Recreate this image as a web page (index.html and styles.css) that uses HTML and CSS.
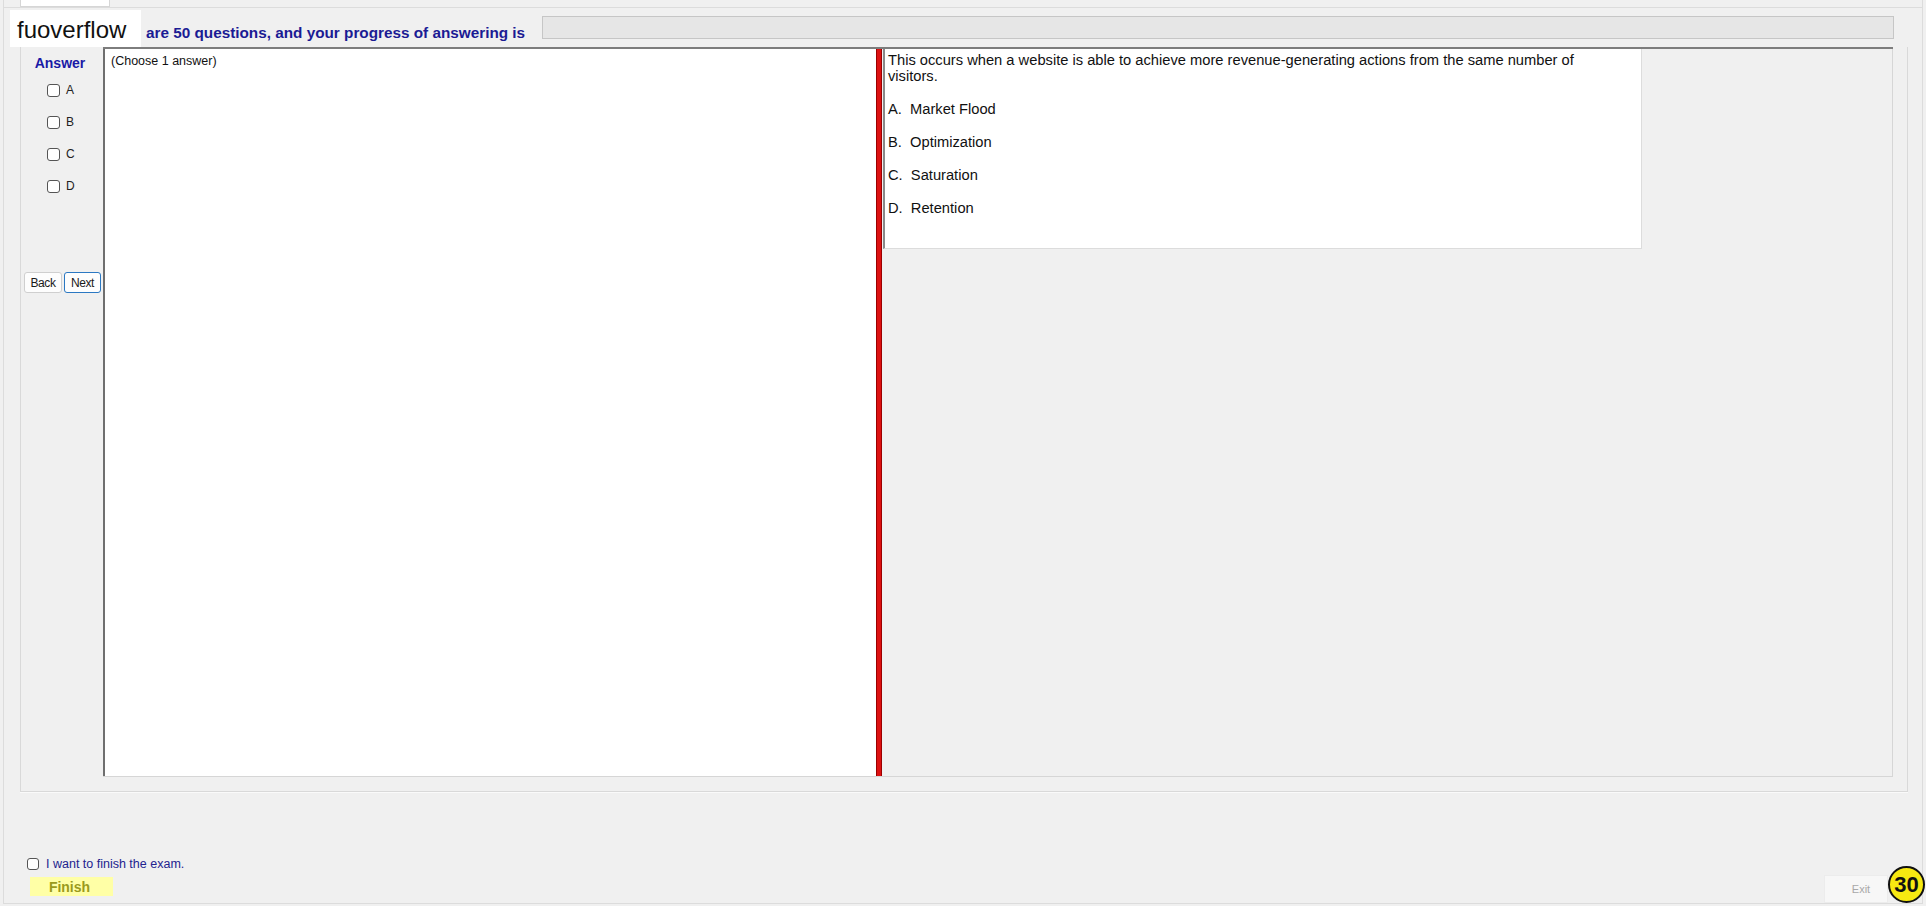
FILE: index.html
```html
<!DOCTYPE html>
<html lang="en">
<head>
    <meta charset="UTF-8">
    <meta name="viewport" content="width=device-width, initial-scale=1.0">
    <title>Exam</title>
    <link rel="stylesheet" href="styles.css">
</head>
<body>

    <div class="app">
        <div class="tabs"><span class="tab"></span></div>

        <header class="top">
            <div class="brand">fuoverflow</div>
            <div class="title">are 50 questions, and your progress of answering is</div>
            <div class="progress"></div>
        </header>

        <section class="group">
            <aside class="answers">
                <div class="answers-title">Answer</div>
                <ul class="choices">
                    <li><span class="box"></span>A</li>
                    <li><span class="box"></span>B</li>
                    <li><span class="box"></span>C</li>
                    <li><span class="box"></span>D</li>
                </ul>
                <div class="nav">
                    <button class="btn">Back</button>
                    <button class="btn btn-focus">Next</button>
                </div>
            </aside>

            <div class="split">
                <div class="pane-left">(Choose 1 answer)</div>
                <div class="splitter"></div>
                <div class="pane-right">
                    <div class="question">
                        <p class="q-text">This occurs when a website is able to achieve more revenue-generating actions from the same number of visitors.</p>
                        <p class="opt">A.  Market Flood</p>
                        <p class="opt">B.  Optimization</p>
                        <p class="opt">C.  Saturation</p>
                        <p class="opt">D.  Retention</p>
                    </div>
                </div>
            </div>
        </section>

        <footer class="bottom">
            <div class="finish-col">
                <label class="finish-check"><span class="box box-small"></span>I want to finish the exam.</label>
                <button class="finish">Finish</button>
            </div>
            <div class="exit-row">
                <button class="exit">Exit</button>
                <div class="counter">30</div>
            </div>
        </footer>
    </div>

</body>
</html>
```

FILE: styles.css
```css
body {
    margin: 0;
    height: 906px;
    background-color: #f0f0f0;
    font-family: "Liberation Sans", Arial, sans-serif;
    display: flex;
    flex-direction: column;
    overflow: hidden;
}

.app {
    flex: 1;
    margin: 0 3px 2px 3px;
    border-left: 1px solid #dcdcdc;
    border-right: 1px solid #dcdcdc;
    border-bottom: 1px solid #dcdcdc;
    display: flex;
    flex-direction: column;
}

/* tab strip at the very top */
.tabs {
    height: 7px;
    border-bottom: 1px solid #dcdcdc;
    padding-left: 16px;
}

.tab {
    display: block;
    width: 90px;
    height: 7px;
    box-sizing: border-box;
    background-color: #fff;
    border: 1px solid #d6d6d6;
    border-top: none;
}

/* header */
.top {
    display: flex;
    height: 37px;
    margin-top: 2px;
    padding-left: 6px;
}

.brand {
    width: 131px;
    box-sizing: border-box;
    padding-left: 7px;
    background-color: #fff;
    font-size: 24px;
    line-height: 39px;
    color: #111;
}

.title {
    margin: 14px 0 0 5px;
    font-size: 15.3px;
    font-weight: bold;
    line-height: 17px;
    color: #1b1b94;
    white-space: nowrap;
}

.progress {
    flex: 1;
    height: 23px;
    margin: 6px 28px 0 17px;
    box-sizing: border-box;
    border: 1px solid #c6c6c6;
    background-color: #e6e6e6;
}

/* main group */
.group {
    flex: none;
    height: 745px;
    box-sizing: border-box;
    margin: 0 14px 0 16px;
    padding-bottom: 14px;
    border-left: 1px solid #d9d9d9;
    border-right: 1px solid #d9d9d9;
    border-bottom: 1px solid #d9d9d9;
    box-shadow: 0 1px 0 #fafafa;
    display: flex;
}

.answers {
    width: 82px;
    flex: none;
    padding-top: 8px;
}

.answers-title {
    padding-right: 4px;
    text-align: center;
    font-size: 14px;
    font-weight: bold;
    line-height: 16px;
    color: #1a1aa6;
}

.choices {
    list-style: none;
    margin: 3px 0 0;
    padding: 0 0 0 26px;
}

.choices li {
    height: 32px;
    display: flex;
    align-items: center;
    gap: 6px;
    font-size: 12px;
    color: #222;
}

.box {
    width: 13px;
    height: 13px;
    box-sizing: border-box;
    border: 1px solid #555;
    border-radius: 3px;
    background-color: #fff;
}

.box-small {
    width: 12px;
    height: 12px;
}

.nav {
    display: flex;
    gap: 2px;
    margin: 70px 0 0 3px;
}

.btn {
    width: 38px;
    height: 21px;
    padding: 0;
    font-family: "Liberation Sans", Arial, sans-serif;
    font-size: 12px;
    letter-spacing: -0.4px;
    color: #1a1a1a;
    background-color: #fdfdfd;
    border: 1px solid #cfcfcf;
    border-radius: 3px;
}

.btn-focus {
    width: 37px;
    border-color: #2b78c2;
}

/* split panes */
.split {
    flex: 1;
    margin-right: 14px;
    display: flex;
    border-top: 2px solid #7d7d7d;
    border-bottom: 1px solid #d6d6d6;
}

.pane-left {
    width: 773px;
    flex: none;
    box-sizing: border-box;
    padding: 5px 6px;
    border-left: 2px solid #6f6f6f;
    background-color: #fff;
    font-size: 12.5px;
    line-height: 15px;
    color: #111;
}

.splitter {
    width: 6px;
    flex: none;
    box-sizing: border-box;
    background-color: #dd1111;
    border-left: 1px solid #9b0000;
    border-right: 1px solid #9b0000;
}

.pane-right {
    flex: 1;
    padding-left: 1px;
    border-right: 1px solid #d6d6d6;
}

.question {
    width: 759px;
    height: 200px;
    box-sizing: border-box;
    padding: 3px 0 0 3px;
    background-color: #fff;
    border-left: 2px solid #8a8a8a;
    border-right: 1px solid #dcdcdc;
    border-bottom: 1px solid #dcdcdc;
    font-size: 14.7px;
    line-height: 16px;
    color: #111;
}

.q-text {
    margin: 0;
    max-width: 720px;
}

.opt {
    margin: 17px 0 0;
    white-space: pre;
}

/* footer */
.bottom {
    margin-top: auto;
    display: flex;
    justify-content: space-between;
    align-items: flex-end;
    padding-left: 23px;
}

.finish-col {
    margin-bottom: 7px;
}

.finish-check {
    height: 15px;
    display: flex;
    align-items: center;
    gap: 7px;
    font-size: 12.5px;
    color: #23238f;
}

.finish {
    display: block;
    width: 83px;
    height: 19px;
    margin: 6px 0 0 3px;
    padding: 0 4px 0 0;
    border: none;
    background-color: #ffffa6;
    font-family: "Liberation Sans", Arial, sans-serif;
    font-size: 14px;
    font-weight: bold;
    color: #9a9a1c;
}

.exit-row {
    display: flex;
    align-items: flex-end;
    margin-right: -3px;
}

.exit {
    width: 64px;
    height: 28px;
    padding: 0 0 0 10px;
    background-color: #f7f7f7;
    border: 1px solid #ececec;
    font-family: "Liberation Sans", Arial, sans-serif;
    font-size: 11px;
    color: #a8a8a8;
}

.counter {
    width: 37px;
    height: 37px;
    box-sizing: border-box;
    border: 2px solid #111;
    border-radius: 50%;
    background-color: #f7e911;
    font-size: 22px;
    font-weight: bold;
    line-height: 33px;
    text-align: center;
    color: #111;
}
```
